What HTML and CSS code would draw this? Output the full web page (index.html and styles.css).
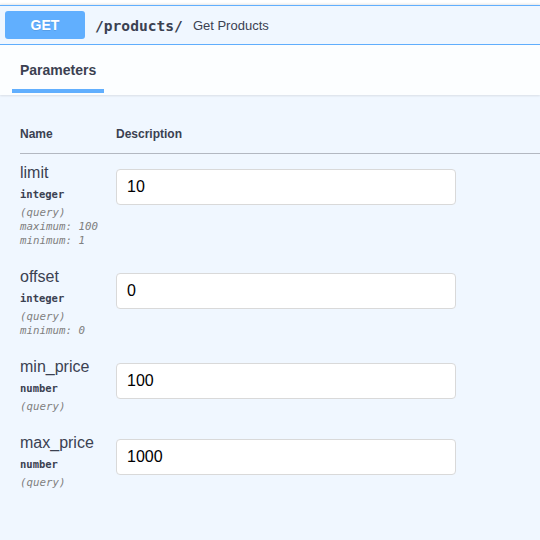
FILE: index.html
```html
<!DOCTYPE html>
<html>
<head>
<meta charset="utf-8">
<link rel="stylesheet" href="styles.css">
</head>
<body>
<div class="opblock">
  <div class="summary">
    <span class="method">GET</span>
    <span class="path">/products/</span>
    <span class="summary-desc">Get Products</span>
  </div>
  <div class="section-header">
    <h4 class="tab"><span class="tab-label">Parameters</span></h4>
  </div>
  <div class="table-container">
    <div class="params-head">
      <div class="th">Name</div>
      <div class="th">Description</div>
    </div>
    <div class="param-row">
      <div class="col-name">
        <div class="p-name">limit</div>
        <div class="p-type">integer</div>
        <div class="p-in">(query)</div>
        <div class="p-ext">maximum: 100</div>
        <div class="p-ext">minimum: 1</div>
      </div>
      <div class="col-desc"><input class="p-input" type="text" value="10"></div>
    </div>
    <div class="param-row">
      <div class="col-name">
        <div class="p-name">offset</div>
        <div class="p-type">integer</div>
        <div class="p-in">(query)</div>
        <div class="p-ext">minimum: 0</div>
      </div>
      <div class="col-desc"><input class="p-input" type="text" value="0"></div>
    </div>
    <div class="param-row">
      <div class="col-name">
        <div class="p-name">min_price</div>
        <div class="p-type">number</div>
        <div class="p-in">(query)</div>
      </div>
      <div class="col-desc"><input class="p-input" type="text" value="100"></div>
    </div>
    <div class="param-row">
      <div class="col-name">
        <div class="p-name">max_price</div>
        <div class="p-type">number</div>
        <div class="p-in">(query)</div>
      </div>
      <div class="col-desc"><input class="p-input" type="text" value="1000"></div>
    </div>
  </div>
</div>
</body>
</html>
```

FILE: styles.css
```css
* { box-sizing: border-box; }
html, body {
  margin: 0;
  padding: 0;
  background: #ffffff;
  overflow: hidden;
  height: 540px;
}
body {
  font-family: "Liberation Sans", Arial, sans-serif;
  color: #3b4151;
}
.opblock {
  margin: 5px -1px 0 -1px;
  border: 1px solid #61affe;
  border-bottom: 0;
  background: #f0f7ff;
  box-shadow: 0 0 3px rgba(0, 0, 0, 0.19);
  min-height: 535px;
}
.summary {
  display: flex;
  align-items: center;
  padding: 5px 5px 5px 5px;
  border-bottom: 1px solid #61affe;
}
.method {
  width: 80px;
  height: 28px;
  border-radius: 3px;
  background: #61affe;
  color: #fff;
  font-weight: 700;
  font-size: 14px;
  display: flex;
  align-items: center;
  justify-content: center;
  text-shadow: 0 1px 0 rgba(0, 0, 0, 0.1);
}
.path {
  font-family: "DejaVu Sans Mono", monospace;
  font-weight: 700;
  font-size: 14.6px;
  color: #3b4151;
  padding: 0 10px;
}
.summary-desc {
  font-size: 13px;
  color: #3b4151;
}
.section-header {
  height: 50px;
  padding: 17px 20px 0 12px;
  background: rgba(255, 255, 255, 0.8);
  box-shadow: 0 1px 2px rgba(0, 0, 0, 0.1);
}
.tab {
  margin: 0;
  font-size: 14px;
  font-weight: 700;
}
.tab-label {
  display: inline-block;
  line-height: 16px;
  padding: 0 8px 11px 8px;
  border-bottom: 4px solid #61affe;
}
.table-container {
  padding: 20px 0 20px 20px;
}
.params-head {
  display: grid;
  grid-template-columns: 96px 1fr;
  border-bottom: 1px solid #b3b8c1;
  padding: 12px 0 12px 0;
}
.th {
  font-size: 12px;
  font-weight: 700;
  line-height: 14px;
}
.param-row {
  display: grid;
  grid-template-columns: 96px 1fr;
  padding: 10px 0;
}
.p-name {
  font-size: 16px;
  line-height: 18px;
  color: #3b4151;
}
.p-type {
  font-family: "DejaVu Sans Mono", monospace;
  font-size: 10.5px;
  font-weight: 700;
  line-height: 14px;
  padding: 5px 0;
}
.p-in, .p-ext {
  font-family: "DejaVu Sans Mono", monospace;
  font-style: italic;
  font-size: 10.8px;
  color: #808080;
}
.p-in { line-height: 14px; }
.p-ext { line-height: 14px; }
.col-desc { padding-top: 5px; }
.p-input {
  display: block;
  width: 340px;
  height: 36px;
  padding: 8px 10px;
  border: 1px solid #d9d9d9;
  border-radius: 4px;
  background: #fff;
  font-family: "Liberation Sans", Arial, sans-serif;
  font-size: 16px;
  color: #000;
  margin: 0;
}
```
